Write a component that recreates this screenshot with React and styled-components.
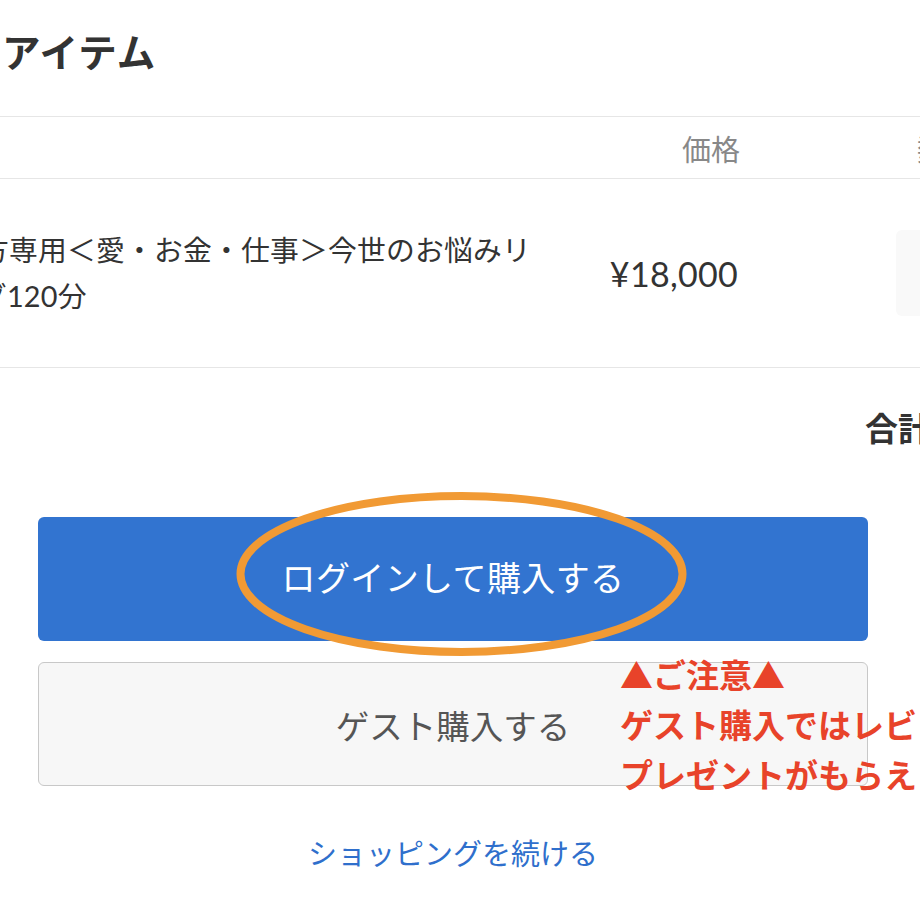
import React from "react";
import styled, { createGlobalStyle } from "styled-components";

const GlobalStyle = createGlobalStyle`
  html, body {
    margin: 0;
    padding: 0;
    background: #ffffff;
    overflow: hidden;
  }
  body {
    font-family: Lato, "Noto Sans CJK JP", sans-serif;
    color: #333333;
  }
`;

const Viewport = styled.div`
  width: 920px;
  height: 920px;
  overflow: hidden;
  position: relative;
`;

const Wide = styled.div`
  margin-left: -142px;
  width: 1400px;
`;

const Title = styled.h2`
  margin: 26px 0 38px -14px;
  font-size: 38.5px;
  letter-spacing: 1px;
  font-weight: 700;
  line-height: 52px;
  color: #333333;
  white-space: nowrap;
`;

const Table = styled.div`
  border-bottom: 1px solid #e6e6e6;
`;

const Row = styled.div`
  display: grid;
  grid-template-columns: 676px 206px 1fr;
  align-items: center;
  box-sizing: border-box;
  height: ${(p) => p.$height}px;
  border-top: 1px solid #e6e6e6;
`;

const HeadCell = styled.div`
  font-size: 29px;
  color: #888888;
  text-align: ${(p) => p.$align || "left"};
  padding-left: ${(p) => p.$pad || 0}px;
  white-space: nowrap;
`;

const QtyHead = styled(HeadCell)`
  padding-left: 156px;
  width: 100px;
  text-align: center;
`;

const Name = styled.div`
  padding-left: 6px;
  font-size: 28.8px;
  letter-spacing: 0.2px;
  line-height: 46px;
  color: #333333;
`;

const Price = styled.div`
  font-size: 34px;
  letter-spacing: 0.3px;
  color: #333333;
  text-align: right;
  padding-right: 2px;
`;

const QtyCell = styled.div`
  padding-left: 156px;
`;

const QtyBox = styled.div`
  width: 100px;
  height: 86px;
  border-radius: 6px;
  background: #f9f9f9;
  display: flex;
  align-items: center;
  justify-content: center;
  font-size: 28px;
  color: #333333;
`;

const Summary = styled.div`
  display: flex;
  align-items: center;
  gap: 24px;
  height: 118px;
  padding-left: 1007px;
  font-size: 33px;
  font-weight: 700;
  color: #333333;
  white-space: nowrap;
`;

const Checkout = styled.div`
  position: relative;
  margin: 31px 0 0 38px;
  width: 830px;
  display: flex;
  flex-direction: column;
  gap: 21px;
`;

const Button = styled.div`
  box-sizing: border-box;
  height: 124px;
  border-radius: 6px;
  display: flex;
  align-items: center;
  justify-content: center;
  font-size: ${(p) => (p.$primary ? "34px" : "33.5px")};
  letter-spacing: ${(p) => (p.$primary ? "0.4px" : "0")};
  padding-bottom: ${(p) => (p.$primary ? "6px" : "0")};
  background: ${(p) => (p.$primary ? "#3274d0" : "#f7f7f7")};
  color: ${(p) => (p.$primary ? "#ffffff" : "#555555")};
  border: ${(p) => (p.$primary ? "none" : "1px solid #c8c8c8")};
`;

const ContinueLink = styled.a`
  display: block;
  margin-top: 27px;
  line-height: 40px;
  text-align: center;
  font-size: 29px;
  color: #2f6fcc;
  text-decoration: none;
`;

const Highlight = styled.svg`
  position: absolute;
  left: 194px;
  top: -30px;
  overflow: visible;
  pointer-events: none;
`;

const Notice = styled.div`
  position: absolute;
  left: 582px;
  top: 132px;
  font-family: "Noto Sans CJK JP", sans-serif;
  font-size: 33px;
  font-weight: 700;
  line-height: 50px;
  color: #e8432a;
  white-space: nowrap;
`;

export default function App() {
  return (
    <Viewport>
      <GlobalStyle />
      <Wide>
        <Title>カートのアイテム</Title>
        <Table>
          <Row $height={62}>
            <HeadCell $pad={6}>商品</HeadCell>
            <HeadCell $align="right">価格</HeadCell>
            <QtyHead>数量</QtyHead>
          </Row>
          <Row $height={189}>
            <Name>初めての方専用＜愛・お金・仕事＞今世のお悩みリーディング120分</Name>
            <Price>¥18,000</Price>
            <QtyCell>
              <QtyBox>1</QtyBox>
            </QtyCell>
          </Row>
        </Table>
        <Summary>
          <span>合計</span>
          <span>¥18,000</span>
        </Summary>
      </Wide>
      <Checkout>
        <Button $primary>ログインして購入する</Button>
        <Button>ゲスト購入する</Button>
        <ContinueLink href="#">ショッピングを続ける</ContinueLink>
        <Highlight width="460" height="174" viewBox="0 0 460 174">
          <ellipse cx="229.5" cy="87" rx="221" ry="78" fill="none" stroke="#f19a34" strokeWidth="8" />
        </Highlight>
        <Notice>
          ▲ご注意▲
          <br />
          ゲスト購入ではレビュー投稿の
          <br />
          プレゼントがもらえません
        </Notice>
      </Checkout>
    </Viewport>
  );
}
